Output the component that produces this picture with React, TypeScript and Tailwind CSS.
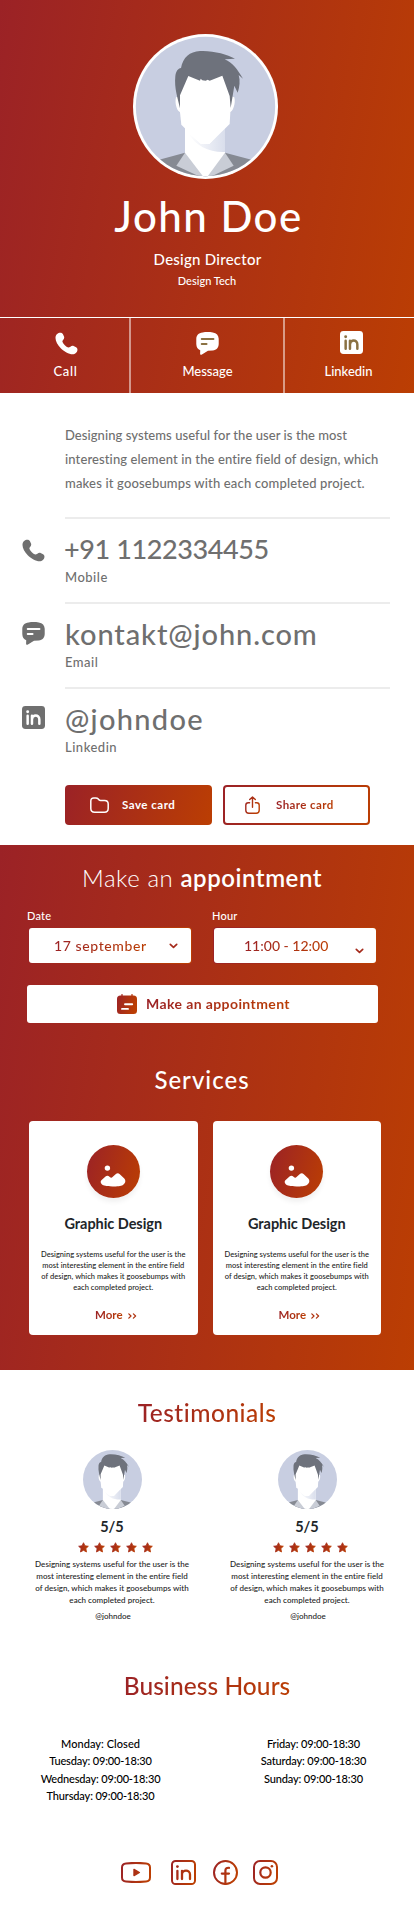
import React, { useId } from "react";

const textGradient = "bg-linear-[100deg] from-[#9b2226] to-[#bb3e03] bg-clip-text text-transparent";

function Avatar({ className, viewBox, ring }: { className: string; viewBox: string; ring?: boolean }) {
  const id = useId();
  const box = viewBox.split(" ").map(Number);
  const cx = box[0] + box[2] / 2;
  const cy = box[1] + box[3] / 2;
  const r = ring ? 209 : box[2] / 2;
  return (
    <svg className={className} viewBox={viewBox}>
      <defs>
        <clipPath id={`${id}c`}>
          <circle cx={cx} cy={cy} r={r} />
        </clipPath>
        <linearGradient id={`${id}g`} x1="205" y1="0" x2="315" y2="0" gradientUnits="userSpaceOnUse">
          <stop offset="0" stopColor="#fff" />
          <stop offset="1" stopColor="#d9deec" />
        </linearGradient>
      </defs>
      {ring && <circle cx={cx} cy={cy} r={217.5} fill="#fff" />}
      <g clipPath={`url(#${id}c)`}>
        <rect x="30" y="20" width="460" height="460" fill="#c8cee1" />
        <path d="M112 406 L195 383 H315 L400 406 V470 H112Z" fill="#868a93" />
        <path d="M195 383 L169 422 L246 458 H266 L341 422 L315 383Z" fill="#c9cdd6" />
        <path d="M195 290 H315 V383 L262 455 H250 L195 383Z" fill="#fff" />
        <path d="M205 325 C228 364 268 383 315 381 V305 L268 357 H243Z" fill={`url(#${id}g)`} />
        <path d="M168 217 C163 236 172 262 182 262 V212Z M343 217 C348 236 338 262 329 262 V212Z" fill="#fff" />
        <path d="M178 205 L203 145 H309 L331 205 V262 L329 297 L268 357 H243 L184 299 L180 262Z" fill="#fff" />
        <path
          d="M180 250 C174 222 162 190 166 153 C168 138 174 131 183 129 C189 97 209 80 240 78 C280 76 320 88 345 101 L314 103 C339 114 352 133 369 161 L356 150 C361 167 359 185 353 203 L343 182 L332 249 L329 213 L307 152 L269 167 L263 164 L257 167 L247 166 L242 161 L240 167 L205 153 L180 211Z"
          fill="#6e727c"
        />
      </g>
    </svg>
  );
}

function PhoneIcon({ className }: { className: string }) {
  return (
    <svg className={className} viewBox="0 0 24 24" fill="currentColor">
      <path d="M2.2 2.2C4.2.1 7 .2 8.2 2.2L9.4 4.6C10.4 7.4 7.6 8.2 7.7 10.2C8.6 12.6 11.6 15.6 13.8 16.3C15.8 16.4 16.8 13.8 19.4 14.6L22 15.9C24 17.2 23.9 19.6 21.8 21.9C18.6 25.4 10.6 21.6 6 16.9C1.4 12.2-1.5 5.5 2.2 2.2Z" />
    </svg>
  );
}

function MessageIcon({ className, line }: { className: string; line: string }) {
  return (
    <svg className={className} viewBox="0 0 24 24">
      <path d="M7 .5C10 0 14 0 17.5.5C21.5 1 23.5 3.5 23.7 7V12.5C23.6 16.5 21.5 18.8 17.5 19.2L12.5 19.6L6.2 23.5C5 24.2 4.2 23.6 4.3 22.4L4.4 19C1.8 18 .4 15.8.3 12.5V7C.4 3.5 2.5 1 7 .5Z" fill="currentColor" />
      <path d="M6 7.4H18.2M6 12.4H11" stroke={line} strokeWidth="2.1" strokeLinecap="round" />
    </svg>
  );
}

function LinkedinSolid({ className, line }: { className: string; line: string }) {
  return (
    <svg className={className} viewBox="0 0 24 24" fill="none">
      <rect width="24" height="24" rx="3.6" fill="currentColor" />
      <circle cx="5.9" cy="6" r="1.5" fill={line} />
      <path d="M5.9 10.1V18.5M10.4 18.5V10.1M10.4 14C10.4 8.8 18.1 8.6 18.1 14V18.5" stroke={line} strokeWidth="2.6" strokeLinecap="round" />
    </svg>
  );
}

function GradientSvg({ className, w, h, children }: { className: string; w: number; h: number; children: (paint: string) => React.ReactNode }) {
  const id = useId();
  return (
    <svg className={className} viewBox={`0 0 ${w} ${h}`} fill="none">
      <defs>
        <linearGradient id={id} x1="0" y1="0" x2={w} y2={h * 0.25} gradientUnits="userSpaceOnUse">
          <stop stopColor="#9b2226" />
          <stop offset="1" stopColor="#bb3e03" />
        </linearGradient>
      </defs>
      {children(`url(#${id})`)}
    </svg>
  );
}

function Chevron({ className }: { className: string }) {
  return (
    <svg className={className} viewBox="0 0 9 6" fill="none">
      <path d="M1.3 1.3L4.5 4.3L7.7 1.3" stroke="#a52a1b" strokeWidth="1.7" strokeLinecap="round" strokeLinejoin="round" />
    </svg>
  );
}

const blurb = [
  "Designing systems useful for the user is the",
  "most interesting element in the entire field",
  "of design, which makes it goosebumps with",
  "each completed project.",
];

function ServiceCard() {
  return (
    <article className="flex h-[214px] w-[168.5px] flex-col items-center rounded-[4px] bg-white pt-6">
      <div className="flex size-[53px] items-center justify-center rounded-full bg-linear-[105deg] from-[#9b2226] to-[#bb3e03] shadow-[0_4px_5px_rgba(0,0,0,0.06)]">
        <svg className="mt-2 h-[22px] w-[26px]" viewBox="0 0 26 22" fill="#fff">
          <circle cx="7.4" cy="3.1" r="2.7" />
          <path d="M1.4 15.2L5.5 11.5C7 10.2 8.3 10.6 9.5 11.7C11 13.1 11.6 13 12.8 11.8L15.6 9.3C17.3 7.7 18.6 8.2 19.8 9.3L24.3 13.6C26.2 15.6 25.4 18.6 22.6 20.2C20 21.8 7 21.8 4.1 20.6C1 19.4-.2 17 1.4 15.2Z" />
        </svg>
      </div>
      <h3 className="mt-[17px] text-[14.5px] leading-[18px] font-bold tracking-[-0.05px] text-[#212529]">Graphic Design</h3>
      <p className="mt-4 text-center text-[7.5px] leading-[11px] font-medium tracking-[0.04px] text-[#1c1c1c]">
        {blurb.map((l) => (
          <span key={l} className="block whitespace-nowrap">{l}</span>
        ))}
      </p>
      <a className="mt-[15px] flex items-center gap-[5px] pl-[5px] text-[11.5px] leading-[14px] font-bold">
        <span className={textGradient}>More</span>
        <svg className="mt-[2px] h-[6px] w-[9px]" viewBox="0 0 9 6" fill="none" stroke="#b0330f" strokeWidth="1.2" strokeLinecap="round" strokeLinejoin="round">
          <path d="M.8.8L3 3L.8 5.2M5.4.8L7.6 3L5.4 5.2" />
        </svg>
      </a>
    </article>
  );
}

function Testimonial() {
  return (
    <article className="flex w-[155px] flex-col items-center">
      <Avatar className="size-[59px]" viewBox="62 49 395 395" />
      <div className="mt-[9px] text-[14.5px] leading-[18px] font-bold text-[#212529]">5/5</div>
      <div className="mt-[6px] flex gap-[5px] pl-[6px]">
        {[0, 1, 2, 3, 4].map((n) => (
          <GradientSvg key={n} className="h-[11px] w-[11px]" w={24} h={24}>
            {(paint) => (
              <path d="M12 1.6L15.2 8.3L22.6 9.3L17.2 14.4L18.6 21.8L12 18.2L5.4 21.8L6.8 14.4L1.4 9.3L8.8 8.3Z" fill={paint} stroke={paint} strokeWidth="1.8" strokeLinejoin="round" />
            )}
          </GradientSvg>
        ))}
      </div>
      <p className="mt-[5px] text-center text-[8px] leading-[12px] font-medium tracking-[0.04px] text-[#1c1c1c]">
        {blurb.map((l) => (
          <span key={l} className="block whitespace-nowrap">{l}</span>
        ))}
      </p>
      <div className="mt-1 pl-[2px] text-[8px] leading-[12px] font-medium text-[#1c1c1c]">@johndoe</div>
    </article>
  );
}

function ContactRow({ icon, value, label, type }: { icon: React.ReactNode; value: string; label: string; type: string }) {
  return (
    <div className="flex h-[85px] pl-[22px]">
      <div className="w-[43px]">{icon}</div>
      <div className="w-[325px] border-t-2 border-[#ececec] pt-[13px] font-medium whitespace-nowrap">
        <div className={`leading-[34px] ${type}`}>{value}</div>
        <div className="mt-[3px] text-[13px] leading-4 tracking-[0.5px]">{label}</div>
      </div>
    </div>
  );
}

function SelectBox({ label, children }: { label: string; children: React.ReactNode }) {
  return (
    <div className="w-[164px]">
      <div className="ml-[-1px] text-[11px] leading-[14px] font-medium tracking-[0.2px] text-white">{label}</div>
      <div className="mt-1 h-[37px] rounded-[4px] bg-linear-[105deg] from-[#9b2226] to-[#bb3e03] p-px">
        <div className="flex h-full items-center rounded-[3px] bg-white">{children}</div>
      </div>
    </div>
  );
}

export default function App() {
  return (
    <main className="h-[1926px] w-[414px] overflow-hidden bg-white font-['Lato','Open_Sans',sans-serif]">
      <header className="h-[393px] bg-linear-[100deg] from-[#9b2226] to-[#bb3e03] text-white">
        <div className="flex h-[317px] flex-col items-center pt-[34px]">
          <Avatar className="mr-[3px] size-[145px]" viewBox="39 27 435 435" ring />
          <h1 className="mt-3 pl-[3px] text-[42px] leading-[50px] font-medium tracking-[1.5px]">John Doe</h1>
          <div className="mt-2 pl-px text-[15px] leading-5 font-medium tracking-[0.25px]">Design Director</div>
          <div className="mt-[5px] text-[11px] leading-[14px] font-medium">Design Tech</div>
        </div>
        <nav className="flex h-[76px] border-t border-white text-[13px] leading-4 font-medium">
          <a className="flex w-[129px] flex-col items-center pt-[14px]">
            <PhoneIcon className="ml-[4px] size-[23px]" />
            <span className="mt-2 ml-[2px] tracking-[0.7px]">Call</span>
          </a>
          <a className="flex w-[156px] flex-col items-center border-x-2 border-white/50 pt-[14px]">
            <MessageIcon className="size-[23px]" line="#8a7142" />
            <span className="mt-2 ml-px">Message</span>
          </a>
          <a className="flex w-[129px] flex-col items-center pt-[13px]">
            <LinkedinSolid className="ml-[4px] size-[23px]" line="#8a7142" />
            <span className="mt-[9px] mr-[2px]">Linkedin</span>
          </a>
        </nav>
      </header>

      <section className="h-[452px] pt-[30px] text-[#6f6f6f]">
        <p className="mb-[22px] pl-[65px] text-[13px] leading-6 font-medium whitespace-nowrap">
          <span className="block tracking-[0.06px]">Designing systems useful for the user is the most</span>
          <span className="block tracking-[0.12px]">interesting element in the entire field of design, which</span>
          <span className="block tracking-[0.17px]">makes it goosebumps with each completed project.</span>
        </p>
        <ContactRow icon={<PhoneIcon className="mt-[22px] size-[23px]" />} value="+91 1122334455" label="Mobile" type="ml-[-1px] text-[27px] tracking-[-0.4px]" />
        <ContactRow icon={<MessageIcon className="mt-5 size-[23px]" line="#fff" />} value="kontakt@john.com" label="Email" type="text-[29px] tracking-[0.9px]" />
        <ContactRow icon={<LinkedinSolid className="mt-[19px] size-[23px]" line="#fff" />} value="@johndoe" label="Linkedin" type="text-[29px] tracking-[1.3px]" />
        <div className="mt-[13px] flex gap-[11px] pl-[65px] text-[11.5px] leading-4 font-bold">
          <button className="flex h-10 w-[147px] items-center rounded-[4px] bg-linear-[105deg] from-[#9b2226] to-[#bb3e03] pl-[25px] text-white">
            <svg className="h-4 w-[19px]" viewBox="0 0 19 16" fill="none" stroke="#fff" strokeWidth="1.5" strokeLinejoin="round">
              <path d="M.8 4C.8 1.8 1.7.9 3.8.9H5.8C7 .9 7.6 1.2 8.3 2L9 2.9C9.4 3.3 9.8 3.5 10.5 3.5H14.6C17.3 3.5 18.2 4.6 18.2 7V11.5C18.2 14.2 17 15.2 14.4 15.2H4.7C1.9 15.2.8 14.2.8 11.5Z" />
            </svg>
            <span className="ml-[13px] tracking-[0.5px]">Save card</span>
          </button>
          <button className="h-10 w-[147px] rounded-[4px] bg-linear-[105deg] from-[#9b2226] to-[#bb3e03] p-[2px]">
            <span className="flex h-full items-center rounded-[2px] bg-white pl-5">
              <GradientSvg className="h-[18px] w-[15px]" w={15} h={18}>
                {(paint) => (
                  <path d="M4.6 6.8H3.3C1.6 6.8.8 7.8.8 9.2V14.2C.8 16.2 1.8 17.2 3.8 17.2H11.2C13.2 17.2 14.2 16.2 14.2 14.2V9.2C14.2 7.8 13.4 6.8 11.7 6.8H10.4M7.5 11.2V1M4.7 3.5L7.5.9L10.3 3.5" stroke={paint} strokeWidth="1.4" strokeLinecap="round" strokeLinejoin="round" />
                )}
              </GradientSvg>
              <span className={`ml-4 tracking-[0.4px] ${textGradient}`}>Share card</span>
            </span>
          </button>
        </div>
      </section>

      <section className="h-[525px] bg-linear-[98deg] from-[#9b2226] to-[#bb3e03] pt-[17px]">
        <h2 className="pt-px pl-[82px] text-[24px] leading-[30px] font-light tracking-[0.55px] whitespace-nowrap text-white">
          Make an <span className="font-semibold">appointment</span>
        </h2>
        <div className="mt-4 flex gap-[21px] pl-7">
          <SelectBox label="Date">
            <span className="ml-[25px] w-[115px] text-[14px] leading-[18px] font-medium">
              <span className={`tracking-[0.6px] ${textGradient}`}>17 september</span>
            </span>
            <Chevron className="h-[6px] w-[9px]" />
          </SelectBox>
          <SelectBox label="Hour">
            <span className="ml-[30px] w-[111px] text-[14px] leading-[18px] font-medium">
              <span className={textGradient}>11:00 - 12:00</span>
            </span>
            <Chevron className="mt-[10px] h-[6px] w-[9px]" />
          </SelectBox>
        </div>
        <button className="mt-[21px] ml-[27px] flex h-[38px] w-[351px] items-center rounded-[3px] bg-white pl-[90px]">
          <GradientSvg className="size-5" w={20} h={20}>
            {(paint) => (
              <>
                <path d="M3.5 1.6H16.5C19 1.6 20 2.8 20 5V16.5C20 19 19 20 16.5 20H3.5C1 20 0 19 0 16.5V5C0 2.8 1 1.6 3.5 1.6Z" fill={paint} />
                <path d="M5 .6V3M15 .6V3" stroke={paint} strokeWidth="1.3" strokeLinecap="round" />
                <path d="M8 10.3H15.2M5 14.9H11" stroke="#fff" strokeWidth="1.9" strokeLinecap="round" />
              </>
            )}
          </GradientSvg>
          <span className={`ml-[9px] text-[14px] leading-[18px] font-bold tracking-[0.4px] ${textGradient}`}>Make an appointment</span>
        </button>
        <h2 className="mt-[42px] pr-[10px] text-center text-[24px] leading-[30px] font-medium tracking-[1px] text-white">Services</h2>
        <div className="mt-[26px] flex gap-[15px] pl-[29px]">
          <ServiceCard />
          <ServiceCard />
        </div>
      </section>

      <section className="flex flex-col items-center pt-7">
        <h2 className={`text-[24.5px] leading-[30px] font-medium tracking-[0.5px] ${textGradient}`}>Testimonials</h2>
        <div className="mt-[22px] flex gap-10 pl-[5px]">
          <Testimonial />
          <Testimonial />
        </div>
        <h2 className={`mt-[49px] text-[24.5px] leading-[30px] font-medium tracking-[0.07px] ${textGradient}`}>Business Hours</h2>
        <div className="mt-[34px] grid w-full grid-cols-[201px_213px] text-center text-[11px] leading-[17.4px] font-medium tracking-[-0.15px] text-black">
          <div>
            <div className="tracking-[0.05px]">Monday: Closed</div>
            <div>Tuesday: 09:00-18:30</div>
            <div>Wednesday: 09:00-18:30</div>
            <div>Thursday: 09:00-18:30</div>
          </div>
          <div className="pl-[12px]">
            <div>Friday: 09:00-18:30</div>
            <div>Saturday: 09:00-18:30</div>
            <div>Sunday: 09:00-18:30</div>
          </div>
        </div>
      </section>

      <footer className="mt-[55px] flex items-center pl-[121px]">
        <GradientSvg className="h-[21px] w-[30px]" w={30} h={21}>
          {(paint) => (
            <>
              <path d="M5 1.4C11 .8 19 .8 25 1.4C28 1.7 29 2.8 29 5.5V15.5C29 18.2 28 19.3 25 19.6C19 20.2 11 20.2 5 19.6C2 19.3 1 18.2 1 15.5V5.5C1 2.8 2 1.7 5 1.4Z" stroke={paint} strokeWidth="2" />
              <path d="M13 7.4V13.6L18.4 10.5Z" fill={paint} stroke={paint} strokeWidth="1.4" strokeLinejoin="round" />
            </>
          )}
        </GradientSvg>
        <GradientSvg className="ml-5 size-[25px]" w={25} h={25}>
          {(paint) => (
            <>
              <rect x="1" y="1" width="23" height="23" rx="3.6" stroke={paint} strokeWidth="2" />
              <circle cx="6.4" cy="6.6" r="1.4" fill={paint} />
              <path d="M6.4 10.8V19M11 19V10.8M11 14.6C11 9.4 19 9.4 19 14.6V19" stroke={paint} strokeWidth="2.3" strokeLinecap="round" />
            </>
          )}
        </GradientSvg>
        <GradientSvg className="ml-[17px] size-[25px]" w={25} h={25}>
          {(paint) => (
            <>
              <circle cx="12.5" cy="12.5" r="11.5" stroke={paint} strokeWidth="2" />
              <path d="M12.4 24V10.6C12.4 8.4 13.6 7.6 16 7.8M8.8 13.6H16" stroke={paint} strokeWidth="2.2" strokeLinecap="round" />
            </>
          )}
        </GradientSvg>
        <GradientSvg className="ml-[15px] size-[25px]" w={25} h={25}>
          {(paint) => (
            <>
              <rect x="1" y="1" width="23" height="23" rx="6" stroke={paint} strokeWidth="2" />
              <circle cx="12.5" cy="12.5" r="5.2" stroke={paint} strokeWidth="2.2" />
              <circle cx="18.9" cy="6.2" r="1.3" fill={paint} />
            </>
          )}
        </GradientSvg>
      </footer>
    </main>
  );
}
